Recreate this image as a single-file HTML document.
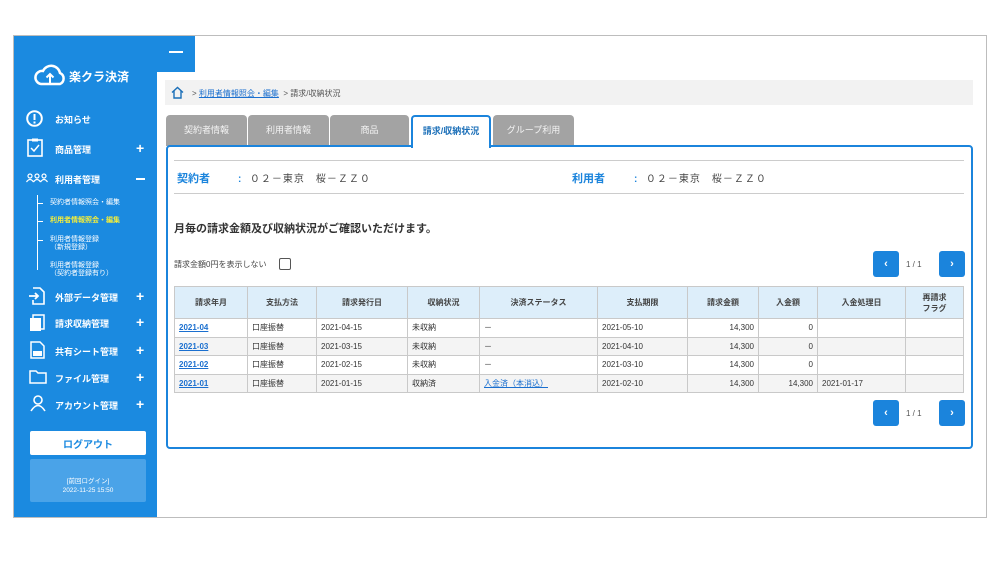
<!DOCTYPE html>
<html><head><meta charset="utf-8"><style>
*{margin:0;padding:0;box-sizing:border-box}
body{width:1000px;height:563px;background:#fff;position:relative;overflow:hidden;font-family:"Liberation Sans","Noto Sans CJK JP",sans-serif;color:#333}
.a{position:absolute}
.frame{left:13px;top:35px;width:974px;height:483px;border:1px solid #bdbdbd}
.side{left:14px;top:36px;width:143px;height:481px;background:#1b8ae0}
.topbar{left:157px;top:36px;width:38px;height:36px;background:#1b8ae0}
.st{color:#fff;font-size:9px;font-weight:bold}
.plus{color:#fff;font-size:14px;font-weight:bold;left:136px}
.sub{color:#fff;font-size:7px;line-height:8px;left:50px}
.tab{top:115px;height:31px;background:#a3a3a3;color:#f4f4f4;font-size:9px;text-align:center;line-height:31px;border-radius:4px 4px 0 0}
table{border-collapse:collapse;font-size:8px}
td,th{border:1px solid #c9c9c9;padding:0 4px;height:18.5px}
th{background:#ddeefa;height:32px;font-size:8px;font-weight:bold;color:#444;text-align:center}
tr:nth-child(odd) td{background:#f4f4f4}
.lk{color:#1a6fcf;text-decoration:underline;font-weight:bold}
.r{text-align:right}
.btn{width:26px;height:26px;background:#1b84dc;border-radius:3px;color:#fff;font-size:11px;font-weight:bold;text-align:center;line-height:26px}
</style></head><body>
<div class="a frame"></div>
<div class="a side"></div>
<div class="a topbar"></div>
<div class="a" style="left:169px;top:51px;width:14px;height:2px;background:#fff"></div>
<svg class="a" style="left:33px;top:64px" width="34" height="22" viewBox="0 0 34 22"><path d="M8 20 H27 A6 6 0 0 0 27 9 A9 9 0 0 0 10 7 A6.5 6.5 0 0 0 8 20 Z" fill="none" stroke="#fff" stroke-width="2.5"/><path d="M17 19 V10 M13.5 13.5 L17 10 L20.5 13.5" fill="none" stroke="#fff" stroke-width="2"/></svg>
<div class="a" style="left:69px;top:68px;color:#fff;font-size:12px;font-weight:bold">楽クラ決済</div>
<svg class="a" style="left:26px;top:110px" width="17" height="17"><circle cx="8.5" cy="8.5" r="7.3" fill="none" stroke="#fff" stroke-width="2"/><rect x="7.5" y="4" width="2" height="6" fill="#fff"/><rect x="7.5" y="11.5" width="2" height="2" fill="#fff"/></svg>
<div class="a st" style="left:55px;top:113px">お知らせ</div>
<svg class="a" style="left:27px;top:138px" width="16" height="19"><rect x="1" y="2" width="14" height="16" fill="none" stroke="#fff" stroke-width="1.6"/><rect x="5" y="0.5" width="6" height="3" fill="#fff"/><path d="M4 10 L7 13 L12 7" fill="none" stroke="#fff" stroke-width="1.5"/></svg>
<div class="a st" style="left:55px;top:143px">商品管理</div><div class="a plus" style="top:140px">+</div>
<svg class="a" style="left:26px;top:173px" width="22" height="10"><g fill="none" stroke="#fff" stroke-width="1.2"><circle cx="4" cy="3" r="2"/><path d="M0.5 9 Q4 4 7.5 9"/><circle cx="11" cy="3" r="2"/><path d="M7.5 9 Q11 4 14.5 9"/><circle cx="18" cy="3" r="2"/><path d="M14.5 9 Q18 4 21.5 9"/></g></svg>
<div class="a st" style="left:55px;top:173px">利用者管理</div><div class="a" style="left:136px;top:178px;width:9px;height:2px;background:#fff"></div>
<div class="a" style="left:37px;top:195px;width:1px;height:75px;background:#fff"></div>
<div class="a" style="left:37px;top:203px;width:6px;height:1px;background:#fff"></div>
<div class="a" style="left:37px;top:221px;width:6px;height:1px;background:#fff"></div>
<div class="a" style="left:37px;top:240px;width:6px;height:1px;background:#fff"></div>
<div class="a sub" style="top:199px">契約者情報照会・編集</div>
<div class="a sub" style="top:217px;color:#f4ee3a;font-weight:bold">利用者情報照会・編集</div>
<div class="a sub" style="top:236px">利用者情報登録<br>（新規登録）</div>
<div class="a sub" style="top:262px">利用者情報登録<br>（契約者登録有り）</div>
<svg class="a" style="left:28px;top:287px" width="17" height="18"><path d="M5 1 H12 L16 5 V17 H5 V13" fill="none" stroke="#fff" stroke-width="1.6"/><path d="M1 9 H10 M7 6 L10 9 L7 12" fill="none" stroke="#fff" stroke-width="1.8"/></svg>
<div class="a st" style="left:55px;top:291px">外部データ管理</div><div class="a plus" style="top:288px">+</div>
<svg class="a" style="left:29px;top:314px" width="16" height="18"><rect x="4" y="1" width="11" height="14" fill="none" stroke="#fff" stroke-width="1.5"/><rect x="1" y="4" width="11" height="13" fill="#fff"/></svg>
<div class="a st" style="left:55px;top:317px">請求収納管理</div><div class="a plus" style="top:314px">+</div>
<svg class="a" style="left:30px;top:341px" width="15" height="18"><path d="M1 1 H10 L14 5 V17 H1 Z" fill="none" stroke="#fff" stroke-width="1.5"/><rect x="3" y="10" width="9" height="5" fill="#fff"/></svg>
<div class="a st" style="left:55px;top:345px">共有シート管理</div><div class="a plus" style="top:342px">+</div>
<svg class="a" style="left:29px;top:370px" width="18" height="14"><path d="M1 1 H7 L9 3 H17 V13 H1 Z" fill="none" stroke="#fff" stroke-width="1.5"/></svg>
<div class="a st" style="left:55px;top:372px">ファイル管理</div><div class="a plus" style="top:369px">+</div>
<svg class="a" style="left:30px;top:395px" width="16" height="17"><circle cx="8" cy="5" r="4" fill="none" stroke="#fff" stroke-width="1.6"/><path d="M1 16 Q8 5 15 16" fill="none" stroke="#fff" stroke-width="1.6"/></svg>
<div class="a st" style="left:55px;top:399px">アカウント管理</div><div class="a plus" style="top:396px">+</div>
<div class="a" style="left:30px;top:431px;width:116px;height:24px;background:#fff;border-radius:2px;color:#1b8ae0;font-size:10px;font-weight:bold;display:flex;align-items:center;justify-content:center">ログアウト</div>
<div class="a" style="left:30px;top:459px;width:116px;height:43px;background:#4aa3e8;border-radius:2px;color:#fff;font-size:6.5px;text-align:center;line-height:9px;display:flex;flex-direction:column;justify-content:center;padding-top:10px"><div>[前回ログイン]</div><div>2022-11-25 15:50</div></div>
<div class="a" style="left:165px;top:80px;width:808px;height:25px;background:#f2f2f2"></div>
<svg class="a" style="left:171px;top:86px" width="13" height="13"><path d="M1 6.5 L6.5 1.5 L12 6.5 M3 5 V12 H10 V5" fill="none" stroke="#1b6fb8" stroke-width="1.4"/></svg>
<div class="a" style="left:192px;top:88px;font-size:8px;color:#555">&gt; <span style="color:#1a6fcf;text-decoration:underline">利用者情報照会・編集</span> &nbsp;&gt; 請求/収納状況</div>
<div class="a tab" style="left:166px;width:81px">契約者情報</div>
<div class="a tab" style="left:248px;width:81px">利用者情報</div>
<div class="a tab" style="left:330px;width:79px">商品</div>
<div class="a tab" style="left:493px;width:81px">グループ利用</div>
<div class="a" style="left:166px;top:145px;width:807px;height:304px;border:2px solid #1b84dc;border-radius:4px;background:#fff"></div>
<div class="a tab" style="left:411px;width:80px;background:#fff;border:2px solid #1b84dc;border-bottom:none;color:#1b6fb8;font-weight:bold;height:33px;line-height:29px;top:115px">請求/収納状況</div>
<div class="a" style="left:174px;top:160px;width:790px;height:1px;background:#ccc"></div>
<div class="a" style="left:174px;top:193px;width:790px;height:1px;background:#ccc"></div>
<div class="a" style="left:177px;top:170px;font-size:11px;font-weight:bold;color:#1b84dc">契約者</div>
<div class="a" style="left:238px;top:170px;font-size:10px;color:#444;letter-spacing:1px"><b style="color:#1b84dc">:</b>&nbsp; ０２－東京　桜－ＺＺ０</div>
<div class="a" style="left:572px;top:170px;font-size:11px;font-weight:bold;color:#1b84dc">利用者</div>
<div class="a" style="left:634px;top:170px;font-size:10px;color:#444;letter-spacing:1px"><b style="color:#1b84dc">:</b>&nbsp; ０２－東京　桜－ＺＺ０</div>
<div class="a" style="left:174px;top:220px;font-size:11px;font-weight:bold;color:#333">月毎の請求金額及び収納状況がご確認いただけます。</div>
<div class="a" style="left:174px;top:259px;font-size:8px;color:#444">請求金額0円を表示しない</div>
<div class="a" style="left:279px;top:258px;width:12px;height:12px;border:1px solid #555;border-radius:2px"></div>
<div class="a btn" style="left:873px;top:251px">‹</div>
<div class="a" style="left:906px;top:260px;font-size:8px;color:#555">1 / 1</div>
<div class="a btn" style="left:939px;top:251px">›</div>
<table class="a" style="left:174px;top:286px;width:790px">
<tr><th style="width:73px">請求年月</th><th style="width:69px">支払方法</th><th style="width:91px">請求発行日</th><th style="width:72px">収納状況</th><th style="width:118px">決済ステータス</th><th style="width:90px">支払期限</th><th style="width:71px">請求金額</th><th style="width:59px">入金額</th><th style="width:88px">入金処理日</th><th>再請求<br>フラグ</th></tr>
<tr><td><span class="lk">2021-04</span></td><td>口座振替</td><td>2021-04-15</td><td>未収納</td><td>－</td><td>2021-05-10</td><td class="r">14,300</td><td class="r">0</td><td></td><td></td></tr>
<tr><td><span class="lk">2021-03</span></td><td>口座振替</td><td>2021-03-15</td><td>未収納</td><td>－</td><td>2021-04-10</td><td class="r">14,300</td><td class="r">0</td><td></td><td></td></tr>
<tr><td><span class="lk">2021-02</span></td><td>口座振替</td><td>2021-02-15</td><td>未収納</td><td>－</td><td>2021-03-10</td><td class="r">14,300</td><td class="r">0</td><td></td><td></td></tr>
<tr><td><span class="lk">2021-01</span></td><td>口座振替</td><td>2021-01-15</td><td>収納済</td><td><span style="color:#1a6fcf;text-decoration:underline">入金済（本消込）</span></td><td>2021-02-10</td><td class="r">14,300</td><td class="r">14,300</td><td>2021-01-17</td><td></td></tr>
</table>
<div class="a btn" style="left:873px;top:400px">‹</div>
<div class="a" style="left:906px;top:409px;font-size:8px;color:#555">1 / 1</div>
<div class="a btn" style="left:939px;top:400px">›</div>
</body></html>
